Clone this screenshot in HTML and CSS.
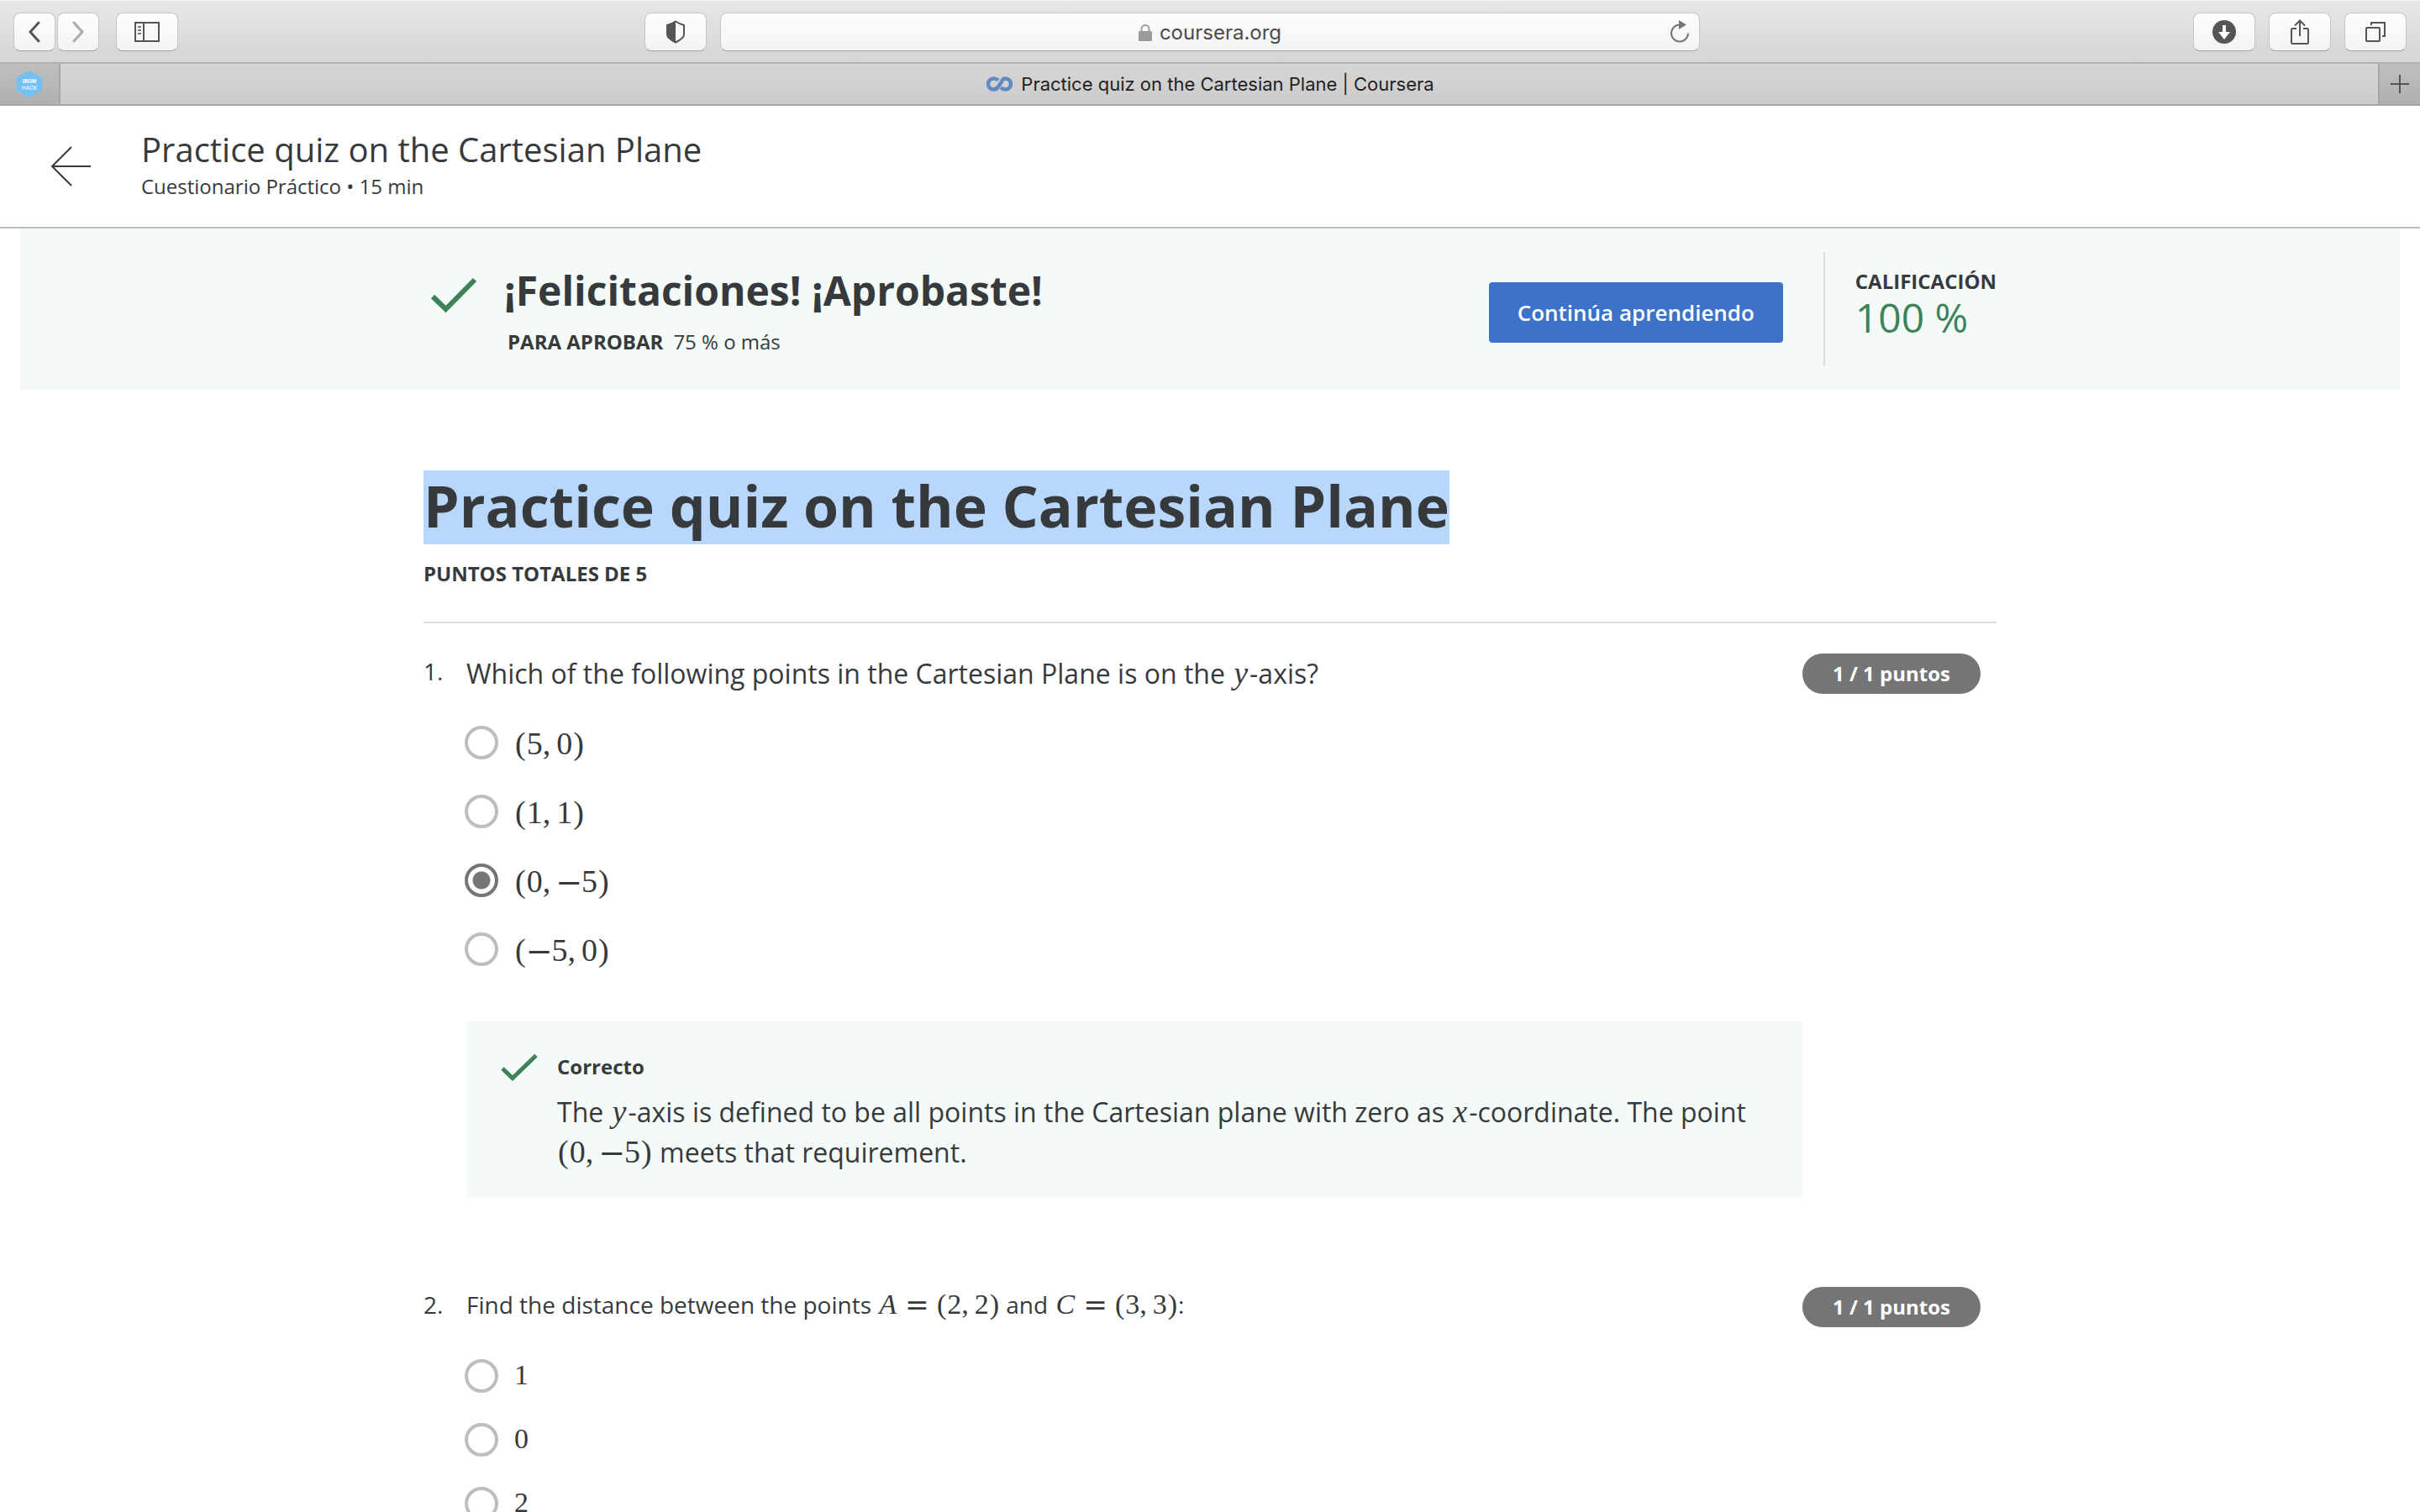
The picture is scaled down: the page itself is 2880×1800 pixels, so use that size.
FILE: index.html
```html
<!DOCTYPE html>
<html lang="es">
<head>
<meta charset="utf-8">
<title>Practice quiz on the Cartesian Plane | Coursera</title>
<link rel="stylesheet" href="styles.css">
</head>
<body>
<div class="toolbar">
  <div class="toolbar-side">
    <div class="nav-pair">
      <button class="tool nav" aria-label="Atrás"><svg width="14" height="26" viewBox="0 0 14 26"><path d="M12 2 2 13l10 11" fill="none" stroke="#555" stroke-width="3" stroke-linecap="round" stroke-linejoin="round"/></svg></button>
      <button class="tool nav" aria-label="Adelante"><svg width="14" height="26" viewBox="0 0 14 26"><path d="M2 2l10 11L2 24" fill="none" stroke="#aaa" stroke-width="3" stroke-linecap="round" stroke-linejoin="round"/></svg></button>
    </div>
    <button class="tool" aria-label="Barra lateral"><svg width="30" height="26" viewBox="0 0 30 26"><path d="M1 2h28v22H1zM11 2v22" fill="none" stroke="#555" stroke-width="2"/><path d="M4 7h4M4 11h4M4 15h4" stroke="#777" stroke-width="2"/></svg></button>
  </div>
  <div class="toolbar-center">
    <button class="tool" aria-label="Informe de privacidad"><svg width="24" height="28" viewBox="0 0 24 28"><path d="M12 1.500C8 4 5 5 2 6v11c0 4 5 7 10 9.500C17 24 22 21 22 17V6c-3-1-6-2-10-4.500z" fill="none" stroke="#555" stroke-width="2"/><path d="M12 1.500C8 4 5 5 2 6v11c0 4 5 7 10 9.500z" fill="#555"/></svg></button>
    <div class="address">
      <span class="host"><svg width="16" height="20" viewBox="0 0 16 20"><path d="M3.500 9V5.500a4.500 4.500 0 0 1 9 0V9" fill="none" stroke="#9b9b9b" stroke-width="2"/><rect y="8" width="16" height="12" rx="1" fill="#9b9b9b"/></svg>coursera.org</span>
      <button class="reload" aria-label="Recargar"><svg width="26" height="28" viewBox="0 0 26 28"><path d="M23 15.500A10 10 0 1 1 13 5.500" fill="none" stroke="#777" stroke-width="2"/><path d="M12 0l9 5.500-9 5.500z" fill="#777"/></svg></button>
    </div>
  </div>
  <div class="toolbar-side right">
    <button class="tool" aria-label="Descargas"><svg width="28" height="28" viewBox="0 0 28 28"><circle cx="14" cy="14" r="14" fill="#555"/><path d="M12 6h4v8h5l-7 9-7-9h5z" fill="#fff"/></svg></button>
    <button class="tool" aria-label="Compartir"><svg width="24" height="32" viewBox="0 0 24 32"><path d="M8 12H3.500Q2 12 2 13.500v15Q2 30 3.500 30h17q1.500 0 1.500-1.500v-15Q22 12 20.500 12H16M12 21V3M6 8.500l6-6 6 6" fill="none" stroke="#555" stroke-width="2"/></svg></button>
    <button class="tool" aria-label="Mostrar pestañas"><svg width="24" height="26" viewBox="0 0 24 26"><rect x="1" y="8" width="16" height="16" rx="1" fill="none" stroke="#555" stroke-width="2"/><path d="M7 5V2h16v16h-3" fill="none" stroke="#555" stroke-width="2"/></svg></button>
  </div>
</div>
<div class="tabs">
  <button class="pinned" aria-label="Ironhack"><svg width="30" height="32" viewBox="0 0 30 32"><path d="M15 0l15 8v16l-15 8L0 24V8z" fill="#74c0f5"/><text x="15" y="15" text-anchor="middle" class="mark-top">IRON</text><text x="15" y="23" text-anchor="middle" class="mark-bottom">HACK</text></svg></button>
  <div class="tab"><svg width="32" height="18" viewBox="0 0 32 18"><path d="M15 4.500C13.500 3 11.500 2.500 9.500 2.500a6.500 6.500 0 0 0 0 13c3 0 5-2 6.500-4.500l2.500-4C19.500 4.500 21 2.500 23.500 2.500a6.500 6.500 0 0 1 0 13c-2.500 0-4-1-5-2.500" fill="none" stroke="#5f8ac4" stroke-width="4.500"/></svg><span>Practice quiz on the Cartesian Plane | Coursera</span></div>
  <button class="new-tab" aria-label="Nueva pestaña"><svg width="22" height="22" viewBox="0 0 22 22"><path d="M11 0v22M0 11h22" stroke="#555" stroke-width="2"/></svg></button>
</div>
<div class="page">
  <header class="header">
    <a class="back" href="#" aria-label="Volver"><svg width="50" height="48" viewBox="0 0 50 48"><path d="M25 1 2 24l23 23M2 24h46" fill="none" stroke="#373a3c" stroke-width="2"/></svg></a>
    <div>
      <div class="header-title">Practice quiz on the Cartesian Plane</div>
      <div class="header-sub">Cuestionario Práctico • 15 min</div>
    </div>
  </header>
  <section class="banner">
    <div class="column banner-row">
      <svg class="banner-check" width="58" height="44" viewBox="0 0 58 44"><path d="M3 23 18.500 38 53 3" fill="none" stroke="#3d8258" stroke-width="6"/></svg>
      <div class="banner-text">
        <h2>¡Felicitaciones! ¡Aprobaste!</h2>
        <p><strong>PARA APROBAR</strong><span>75 % o más</span></p>
      </div>
      <button class="continue">Continúa aprendiendo</button>
      <div class="grade">
        <div class="grade-label">CALIFICACIÓN</div>
        <div class="grade-value">100 %</div>
      </div>
    </div>
  </section>
  <main class="column">
    <h1>Practice quiz on the Cartesian Plane</h1>
    <p class="total">PUNTOS TOTALES DE 5</p>
    <section class="question">
      <span class="number">1.</span>
      <div class="body">
        <p class="prompt large">Which of the following points in the Cartesian Plane is on the <span class="math"><i>y</i></span>-axis?</p>
        <div class="options large">
          <label class="option"><input type="radio" name="q1"><span class="math"><b>(</b>5<u>,</u>0<b>)</b></span></label>
          <label class="option"><input type="radio" name="q1"><span class="math"><b>(</b>1<u>,</u>1<b>)</b></span></label>
          <label class="option"><input type="radio" name="q1" checked><span class="math"><b>(</b>0<u>,</u><s>−</s>5<b>)</b></span></label>
          <label class="option"><input type="radio" name="q1"><span class="math"><b>(</b><s>−</s>5<u>,</u>0<b>)</b></span></label>
        </div>
        <div class="feedback">
          <svg width="46" height="36" viewBox="0 0 46 36"><path d="M3 18 15 29.500 43 2.500" fill="none" stroke="#3d8258" stroke-width="5"/></svg>
          <div>
            <div class="verdict">Correcto</div>
            <p class="large">The <span class="math"><i>y</i></span>-axis is defined to be all points in the Cartesian plane with zero as <span class="math"><i>x</i></span>-coordinate. The point <span class="math"><b>(</b>0<u>,</u><s>−</s>5<b>)</b></span> meets that requirement.</p>
          </div>
        </div>
      </div>
      <span class="points">1 / 1 puntos</span>
    </section>
    <section class="question">
      <span class="number">2.</span>
      <div class="body">
        <p class="prompt">Find the distance between the points <span class="math"><i>A</i><em>=</em><b>(</b>2<u>,</u>2<b>)</b></span> and <span class="math"><i>C</i><em>=</em><b>(</b>3<u>,</u>3<b>)</b></span>:</p>
        <div class="options">
          <label class="option"><input type="radio" name="q2"><span class="math">1</span></label>
          <label class="option"><input type="radio" name="q2"><span class="math">0</span></label>
          <label class="option"><input type="radio" name="q2"><span class="math">2</span></label>
        </div>
      </div>
      <span class="points">1 / 1 puntos</span>
    </section>
  </main>
</div>
</body>
</html>
```
FILE: styles.css
```css
* { box-sizing: border-box; margin: 0; padding: 0; }
body {
  height: 100vh;
  display: flex;
  flex-direction: column;
  overflow: hidden;
  background: #fff;
  color: #373a3c;
  font-family: "Open Sans", "Noto Sans", sans-serif;
  font-size: 28px;
}
button { border: 0; background: none; font: inherit; color: inherit; }
svg { display: block; flex: none; }

/* Browser toolbar */
.toolbar {
  flex: none;
  height: 76px;
  display: grid;
  grid-template-columns: 1fr auto 1fr;
  align-items: center;
  padding: 0 16px;
  background: linear-gradient(#e7e7e7, #d5d5d5);
  border-top: 1px solid #f4f4f4;
  border-bottom: 2px solid #b0b0b0;
  font-family: Inter, sans-serif;
}
.toolbar-side { display: flex; gap: 20px; }
.toolbar-side.right { justify-content: flex-end; gap: 16px; }
.nav-pair { display: flex; gap: 2px; }
.toolbar-center { display: flex; gap: 16px; margin-right: 90px; }
.tool, .address {
  display: flex;
  align-items: center;
  justify-content: center;
  height: 46px;
  background: linear-gradient(#fdfdfd, #f3f3f3);
  border: 1px solid #c6c6c6;
  border-bottom-color: #a2a2a2;
  border-radius: 8px;
}
.tool { width: 74px; }
.tool.nav { width: 50px; }
.address { width: 1166px; padding: 0 10px; color: #4b4b4b; font-size: 24px; }
.host { flex: 1; display: flex; align-items: center; justify-content: center; gap: 9px; padding: 2px 0 0 26px; }

/* Browser tabs */
.tabs {
  flex: none;
  height: 50px;
  display: flex;
  border-bottom: 2px solid #a6a6a6;
  background: linear-gradient(#d6d6d6, #cbcbcb);
  color: #222;
  font-family: Inter, sans-serif;
  font-size: 22px;
}
.pinned, .new-tab { display: flex; align-items: center; justify-content: center; background: linear-gradient(#bebebe, #b0b0b0); }
.pinned { width: 72px; border-right: 2px solid #a6a6a6; }
.new-tab { width: 50px; border-left: 2px solid #a6a6a6; }
.tab { flex: 1; display: flex; align-items: center; justify-content: center; gap: 10px; padding-right: 22px; }
.mark-top, .mark-bottom { fill: #fff; font-family: Roboto, sans-serif; font-size: 7px; }
.mark-top { font-weight: 700; }

/* Course page */
.page { flex: 1; min-height: 0; overflow-y: auto; scrollbar-width: none; }
.column { width: 65%; margin: 0 auto; }
.header { display: flex; align-items: flex-start; height: 146px; padding: 28px 60px; border-bottom: 2px solid #bbb; }
.back { width: 108px; padding-top: 20px; }
.header-title { font-size: 40px; line-height: 48px; }
.header-sub { margin-top: 4px; font-size: 24px; line-height: 32px; }

.banner { margin: 0 24px; padding: 28px 0; background: #f4faf8; }
.banner-row { width: 1872px; max-width: 100%; display: flex; align-items: flex-start; min-height: 136px; }
.banner-check { margin: 30px 30px 0 8px; }
.banner-text { flex: 1; padding-top: 14px; }
.banner-text h2 { font-size: 48px; line-height: 64px; }
.banner-text p { display: flex; gap: 12px; margin-top: 13px; padding-left: 4px; font-size: 24px; line-height: 32px; }
.continue { width: 350px; height: 72px; margin: 36px 48px 0 0; border-radius: 4px; background: #3d73c6; color: #fff; font-size: 26px; font-weight: 600; }
.grade { min-height: 136px; padding: 19px 0 0 36px; border-left: 2px solid #ddd; }
.grade-label { font-size: 24px; font-weight: 700; line-height: 32px; }
.grade-value { color: #3d8258; font-size: 48px; line-height: 54px; }

h1 { width: fit-content; margin-top: 96px; padding-bottom: 4px; background: #b9d6fb; font-size: 68px; line-height: 84px; }
.total { padding: 19px 0 41px; border-bottom: 2px solid #e0e0e0; font-size: 24px; font-weight: 700; line-height: 32px; }

.question { display: flex; align-items: flex-start; margin-top: 36px; }
.question + .question { margin-top: 106px; }
.number { width: 51px; line-height: 42px; }
.body { flex: 1; }
.prompt { min-height: 48px; line-height: 42px; }
.large { font-size: 32px; line-height: 48px; }
.points { width: 212px; margin-right: 19px; border-radius: 24px; background: #757575; color: #fff; font-size: 24px; font-weight: 700; line-height: 48px; text-align: center; }

.options { display: flex; flex-direction: column; gap: 36px; margin-top: 38px; }
.options.large { gap: 40px; }
.option { display: flex; align-items: flex-start; gap: 19px; margin-left: -2px; }
.option .math { line-height: 38px; }
.large .option .math { line-height: 42px; }
.option input { appearance: none; width: 40px; height: 40px; border: 4px solid #bdbdbd; border-radius: 50%; }
.option input:checked { border-color: #757575; background: radial-gradient(circle, #757575 10px, #fff 11px); }

/* Formulas */
.math { font-family: "Liberation Serif", serif; font-size: 34px; line-height: 1; white-space: nowrap; }
.large .math { font-size: 38px; }
.math i { padding: 0 2px; }
.math b { padding: 0 1px; font-weight: 400; }
.math u { padding-right: 7px; text-decoration: none; }
.math s, .math em { font-family: "DejaVu Math TeX Gyre", "Liberation Serif", serif; font-style: normal; line-height: 1; text-decoration: none; }
.math em { padding: 0 9px; }

.feedback { display: flex; gap: 22px; margin-top: 64px; padding: 38px 40px 30px; background: #f4faf8; }
.verdict { margin-bottom: 14px; font-size: 24px; font-weight: 700; line-height: 32px; }
```
